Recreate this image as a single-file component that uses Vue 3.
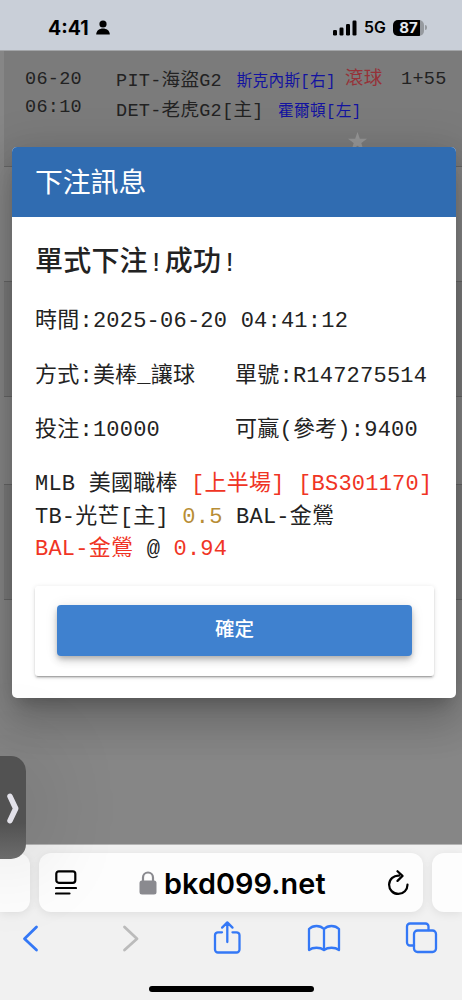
<script setup>
import { ref } from 'vue'

const rows = ref(['dark first', 'light tall', 'dark tall', 'light', 'dark tall', 'light'])
const bet = ref({
    time: '2025-06-20 04:41:12',
    type: '美棒_讓球',
    no: 'R147275514',
    amount: '10000',
    win: '9400'
})
const show = ref(true)
const onConfirm = () => {
    show.value = false
}
</script>

<template>
    <div class="phone">
        <header class="status">
            <span class="clock">4:41</span>
            <svg class="person" viewBox="0 0 14 15">
                <circle cx="7" cy="4" r="3.6" />
                <path d="M.2 14.500C.2 10.500 3.600 8.500 7 8.500S13.800 10.500 13.800 14.500Z" />
            </svg>
            <svg class="signal" viewBox="0 0 24 16">
                <rect x="0" y="10" width="4" height="5.500" rx="1.200" />
                <rect x="6.500" y="7.500" width="4" height="8" rx="1.200" />
                <rect x="13" y="4" width="4" height="11.500" rx="1.200" />
                <rect x="19.500" y="0.500" width="4" height="15" rx="1.200" />
            </svg>
            <span class="net">5G</span>
            <span class="battery">87</span>
            <i class="cap"></i>
        </header>

        <main class="page">
            <div v-for="(row, i) in rows" :key="i" class="row" :class="row">
                <template v-if="i === 0">
                    <div class="date"><div>06-20</div><div>06:10</div></div>
                    <div class="teams">
                        <div>PIT-海盜G2 <span class="pitcher">斯克內斯[右]</span></div>
                        <div>DET-老虎G2[主] <span class="pitcher">霍爾頓[左]</span></div>
                    </div>
                    <div class="live">滾球</div>
                    <div class="odds">1+55</div>
                    <svg class="star" viewBox="0 0 20 20">
                        <path d="M10 0l2.500 7H20l-6 4.600 2.200 7.400L10 14.600 3.800 19 6 11.600 0 7h7.500z" />
                    </svg>
                </template>
            </div>
        </main>

        <section v-if="show" class="modal">
            <h1 class="title">下注訊息</h1>
            <div class="content">
                <h2 class="result">單式下注!成功!</h2>
                <div class="line">時間:{{ bet.time }}</div>
                <div class="line pair"><span>方式:{{ bet.type }}</span><span>單號:{{ bet.no }}</span></div>
                <div class="line pair"><span>投注:{{ bet.amount }}</span><span>可贏(參考):{{ bet.win }}</span></div>
                <div class="game">
                    <div>MLB 美國職棒 <span class="red">[上半場] [BS301170]</span></div>
                    <div>TB-光芒[主] <span class="gold">0.5</span> BAL-金鶯</div>
                    <div><span class="red">BAL-金鶯</span> @ <span class="red">0.94</span></div>
                </div>
                <div class="card">
                    <button class="confirm" @click="onConfirm">確定</button>
                </div>
            </div>
        </section>

        <footer class="browser">
            <div class="tabs">
                <div class="tab"></div>
                <div class="tab address">
                    <svg class="reader" viewBox="0 0 22 26">
                        <rect x="1.300" y="1.300" width="19" height="11.500" rx="2.500" />
                        <path d="M1 18h20M1 23.500h13.500" />
                    </svg>
                    <svg class="lock" viewBox="0 0 18 24">
                        <rect x="0.500" y="9.500" width="17" height="14" rx="2.500" />
                        <path d="M4 11V6.500a5 5 0 0 1 10 0V11" />
                    </svg>
                    <span class="url">bkd099.net</span>
                    <svg class="reload" viewBox="0 0 22 26">
                        <path d="M12 5.600A9.200 9.200 0 1 0 20.500 14.500M10.500 1.200l5 4.700-5 5" />
                    </svg>
                </div>
                <div class="tab"></div>
            </div>
            <nav class="tools">
                <svg viewBox="0 0 34 36"><path class="nav" d="M22.500 7L10.500 18.700 22.500 30" /></svg>
                <svg class="off" viewBox="0 0 34 36"><path class="nav" d="M12.500 7l12.500 11.700L12.500 30" /></svg>
                <svg viewBox="0 0 34 36">
                    <path d="M12 12.300H8a3 3 0 0 0-3 3V29.500a3 3 0 0 0 3 3h18.500a3 3 0 0 0 3-3V15.300a3 3 0 0 0-3-3h-4M17.300 22V2.500M12.100 7.600l5.200-5.200 5.200 5.200" />
                </svg>
                <svg viewBox="0 0 34 36">
                    <path d="M17 9C13 5 6 5 2 9V30c4-3 11-3 15 0 4-3 11-3 15 0V9C28 5 21 5 17 9zM17 9V30" />
                </svg>
                <svg viewBox="0 0 34 36">
                    <path d="M9 25.500H5a3 3 0 0 1-3-3V6.500a3 3 0 0 1 3-3H20.500a3 3 0 0 1 3 3V10" />
                    <rect x="9" y="10.500" width="22" height="21.500" rx="3.500" />
                </svg>
            </nav>
            <div class="home"></div>
        </footer>

        <aside class="handle">
            <svg viewBox="0 0 12 31"><path d="M3 3.300L8.700 15.500 3 27.700" /></svg>
        </aside>
    </div>
</template>

<style>
body {
    margin: 0;
    background: #f1f1f1;
}
</style>

<style scoped>
.phone {
    position: relative;
    display: flex;
    flex-direction: column;
    width: 462px;
    height: 1000px;
    overflow: hidden;
    font-family: "Liberation Mono", "Noto Sans CJK TC", monospace;
    color: #222;
}

.status {
    box-sizing: border-box;
    display: flex;
    align-items: center;
    height: 51px;
    padding: 5px 0 0 48px;
    background: #c9cfd8;
    border-bottom: 1px solid #a3a5a8;
    color: #000;
    font-family: Inter, "Liberation Sans", sans-serif;
    font-weight: 700;
    position: relative;
    z-index: 2;
}

.clock {
    width: 48px;
    font-size: 19.5px;
    letter-spacing: 0;
}

.person {
    width: 14px;
    height: 15px;
}

.signal {
    width: 24px;
    height: 16px;
    margin-left: 223px;
}

.net {
    width: 29px;
    margin-left: 7px;
    font-size: 15.8px;
    font-weight: 600;
}

.battery {
    width: 31px;
    height: 16px;
    border-radius: 5px;
    background: linear-gradient(to right, #000 27px, #969a9f 27px);
    color: #e3e8ee;
    font-size: 15px;
    line-height: 16px;
    text-align: center;
}

.cap {
    width: 2px;
    height: 5px;
    margin-left: 1px;
    border-radius: 0 2px 2px 0;
    background: #969a9f;
}

.page {
    height: 793px;
    padding-left: 4px;
    background: #868686;
}

.row {
    box-sizing: border-box;
    height: 88px;
    border-bottom: 1px solid #666;
}

.row:last-child {
    height: 84px;
    border: 0;
}

.tall {
    height: 115px;
}

.dark {
    background: #7b7b7b;
}

.light {
    background: #858585;
}

.first {
    position: relative;
    display: grid;
    grid-template-columns: 91px 229px 56px auto;
    height: 116px;
    padding: 15px 0 0 21px;
    font-size: 18.5px;
    letter-spacing: 0.3px;
    line-height: 28px;
    white-space: nowrap;
}

.teams {
    padding-top: 1px;
    line-height: 30px;
}

.teams > div {
    height: 30px;
}

.pitcher {
    margin-left: 3px;
    color: #1313a0;
    font-size: 15.7px;
}

.live {
    color: #963238;
}

.star {
    position: absolute;
    left: 344px;
    top: 81px;
    width: 19px;
    fill: #969696;
}

.modal {
    position: absolute;
    left: 12px;
    top: 147px;
    width: 444px;
    height: 551px;
    border-radius: 5px;
    background: #fff;
    box-shadow: 0 11px 15px -7px rgba(0, 0, 0, .2), 0 24px 38px 3px rgba(0, 0, 0, .14), 0 9px 46px 8px rgba(0, 0, 0, .12);
}

.title {
    box-sizing: border-box;
    height: 70px;
    margin: 0;
    padding: 3px 0 0 23px;
    border-radius: 5px 5px 0 0;
    background: #306cb1;
    color: #fff;
    font-size: 27.8px;
    font-weight: 400;
    line-height: 70px;
}

.content {
    padding: 25px 22px 0 23px;
    font-size: 22px;
    letter-spacing: 0.23px;
    white-space: nowrap;
}

.result {
    height: 44px;
    margin: 0 0 9px;
    font-size: 28px;
    font-weight: 500;
    line-height: 44px;
    letter-spacing: 0.2px;
}

.line {
    height: 54.7px;
    line-height: 54px;
}

.pair {
    display: grid;
    grid-template-columns: 200px auto;
}

.game {
    margin-top: 10px;
    line-height: 32.5px;
}

.game > div {
    height: 32.5px;
}

.red {
    color: #f03424;
}

.gold {
    color: #b88d35;
}

.card {
    box-sizing: border-box;
    height: 90px;
    margin-top: 19px;
    padding: 19px 22px;
    border-radius: 3px;
    box-shadow: 0 3px 1px -2px rgba(0, 0, 0, .2), 0 2px 2px rgba(0, 0, 0, .14), 0 1px 5px rgba(0, 0, 0, .12);
}

.confirm {
    display: block;
    width: 100%;
    height: 51px;
    padding: 0 0 5px;
    border: 0;
    border-radius: 4px;
    background: #3f81cf;
    box-shadow: 0 3px 5px -1px rgba(0, 0, 0, .2), 0 5px 8px rgba(0, 0, 0, .14), 0 1px 14px rgba(0, 0, 0, .08);
    color: #fff;
    font-family: "Noto Sans CJK TC", sans-serif;
    font-size: 19.5px;
    font-weight: 500;
}

.browser {
    position: relative;
    height: 156px;
    border-top: 1px solid #b5b5b5;
    background: #f1f1f1;
    box-sizing: border-box;
}

.tabs {
    display: grid;
    grid-template-columns: 30px 384px 30px;
    gap: 9px;
    height: 59px;
    padding-top: 8px;
}

.tab {
    border-radius: 0 12px 12px 0;
    background: #fdfdfd;
    box-shadow: 0 2px 10px rgba(0, 0, 0, .08);
}

.tab:last-child {
    border-radius: 12px 0 0 12px;
}

.address {
    display: flex;
    align-items: center;
    border-radius: 12px;
    color: #000;
    font-family: Inter, "Liberation Sans", sans-serif;
}

.reader {
    width: 22px;
    height: 26px;
    margin-left: 16px;
    fill: none;
    stroke: #000;
    stroke-width: 2.2;
    stroke-linecap: round;
}

.lock {
    width: 18px;
    height: 24px;
    margin-left: 62px;
    fill: #8a8a8f;
}

.lock path {
    fill: none;
    stroke: #8a8a8f;
    stroke-width: 2.2;
}

.url {
    width: 223px;
    margin-left: 7px;
    padding-top: 3px;
    font-size: 28.8px;
    font-weight: 600;
    letter-spacing: 0.1px;
    line-height: 56px;
}

.reload {
    width: 22px;
    height: 26px;
    fill: none;
    stroke: #000;
    stroke-width: 2.2;
    stroke-linecap: round;
    stroke-linejoin: round;
}

.tools {
    display: flex;
    justify-content: space-between;
    padding: 8px 23px 0 14px;
}

.tools svg {
    width: 34px;
    height: 36px;
    fill: none;
    stroke: #3478f6;
    stroke-width: 2.3;
    stroke-linecap: round;
    stroke-linejoin: round;
}

.tools .nav {
    stroke-width: 2.8;
}

.tools .off {
    stroke: #bbb;
}

.home {
    width: 165px;
    height: 5.5px;
    margin: 30px auto 0;
    border-radius: 3px;
    background: #000;
}

/* pull-out tab at the screen edge */
.handle {
    position: absolute;
    z-index: 3;
    left: -14px;
    top: 756px;
    width: 40px;
    height: 103px;
    border-radius: 15px;
    background: linear-gradient(#525252 65%, #6c6c6c);
    box-shadow: 0 0 90px rgba(0, 0, 0, .22);
}

.handle svg {
    width: 12px;
    height: 31px;
    margin: 37px 0 0 21px;
    fill: none;
    stroke: #e2e1e9;
    stroke-width: 5.5;
    stroke-linecap: round;
    stroke-linejoin: round;
}
</style>
